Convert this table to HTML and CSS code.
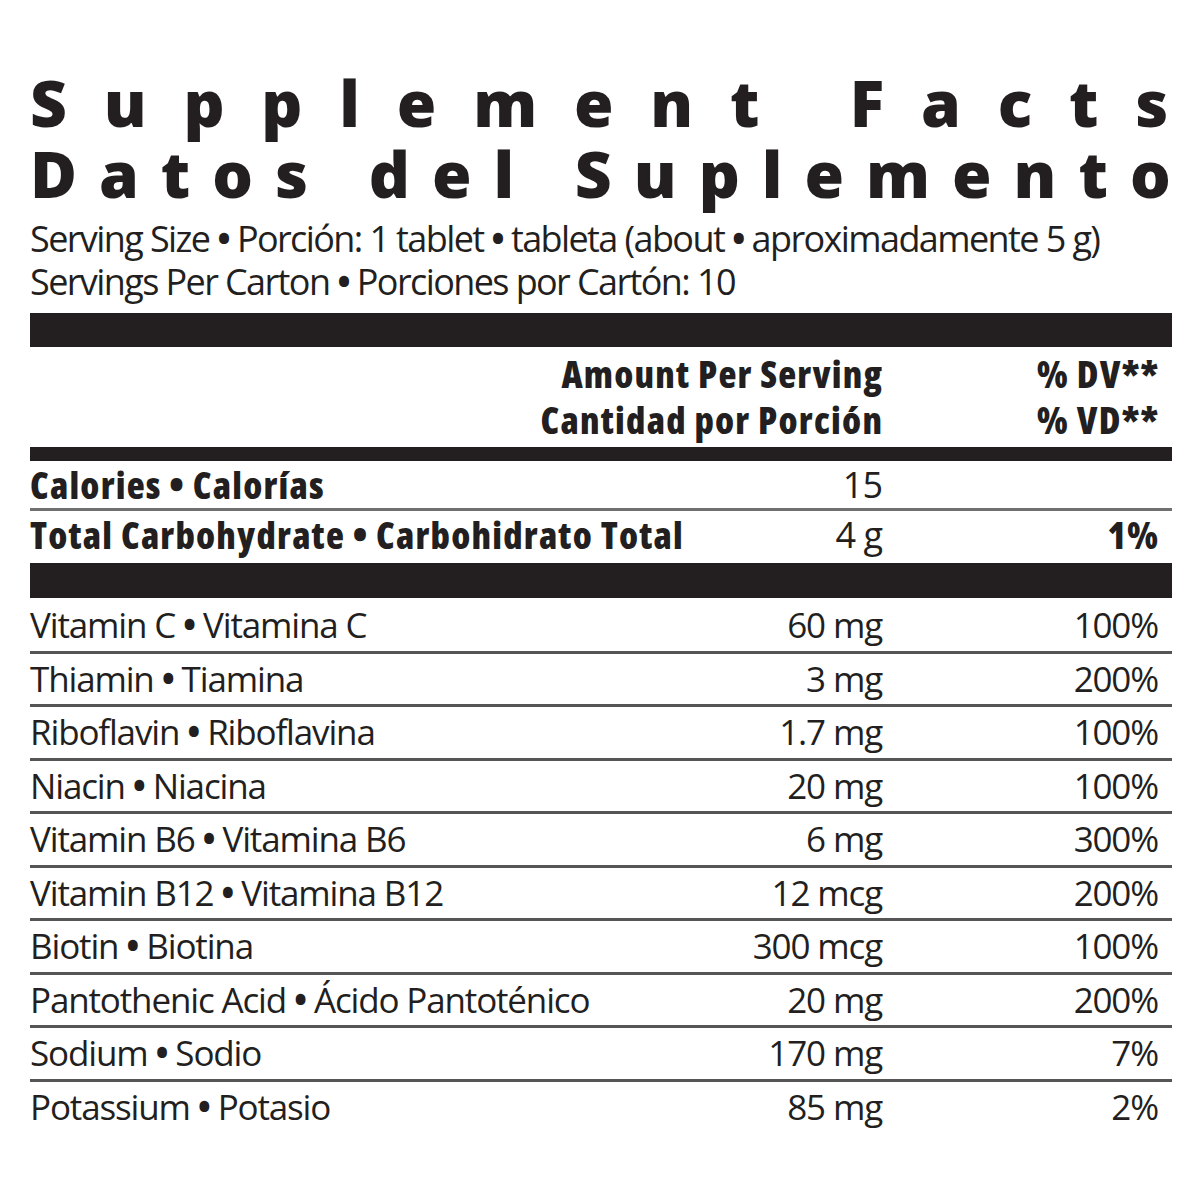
FILE: index.html
```html
<!DOCTYPE html>
<html lang="en">
<head>
<meta charset="utf-8">
<title>Supplement Facts</title>
<link rel="stylesheet" href="styles.css">
</head>
<body>
<div class="label">
  <h1 class="title">
    <span class="title-line title-en">Supplement Fact<span class="end">s</span></span>
    <span class="title-line title-es">Datos del Suplement<span class="end">o</span></span>
  </h1>
  <div class="serving">
    <div>Serving Size <span class="dot">•</span> Porción: 1 tablet <span class="dot">•</span> tableta (about <span class="dot">•</span> aproximadamente 5 g)</div>
    <div>Servings Per Carton <span class="dot">•</span> Porciones por Cartón: 10</div>
  </div>
  <div class="bar bar-top"></div>
  <div class="row head">
    <div class="name"></div>
    <div class="amt bold">Amount Per Serving<br>Cantidad por Porción</div>
    <div class="dv bold">% DV**<br>% VD**</div>
  </div>
  <div class="bar bar-mid"></div>
  <div class="row macro line">
    <div class="name bold">Calories • Calorías</div>
    <div class="amt">15</div>
    <div class="dv"></div>
  </div>
  <div class="row macro last">
    <div class="name bold">Total Carbohydrate • Carbohidrato Total</div>
    <div class="amt">4 g</div>
    <div class="dv bold">1%</div>
  </div>
  <div class="bar bar-sep"></div>
  <div class="items">
    <div class="row item line"><div class="name">Vitamin C <span class="dot">•</span> Vitamina C</div><div class="amt">60 mg</div><div class="dv">100%</div></div>
    <div class="row item line"><div class="name">Thiamin <span class="dot">•</span> Tiamina</div><div class="amt">3 mg</div><div class="dv">200%</div></div>
    <div class="row item line"><div class="name">Riboflavin <span class="dot">•</span> Riboflavina</div><div class="amt">1.7 mg</div><div class="dv">100%</div></div>
    <div class="row item line"><div class="name">Niacin <span class="dot">•</span> Niacina</div><div class="amt">20 mg</div><div class="dv">100%</div></div>
    <div class="row item line"><div class="name">Vitamin B6 <span class="dot">•</span> Vitamina B6</div><div class="amt">6 mg</div><div class="dv">300%</div></div>
    <div class="row item line"><div class="name">Vitamin B12 <span class="dot">•</span> Vitamina B12</div><div class="amt">12 mcg</div><div class="dv">200%</div></div>
    <div class="row item line"><div class="name">Biotin <span class="dot">•</span> Biotina</div><div class="amt">300 mcg</div><div class="dv">100%</div></div>
    <div class="row item line"><div class="name">Pantothenic Acid <span class="dot">•</span> Ácido Pantoténico</div><div class="amt">20 mg</div><div class="dv">200%</div></div>
    <div class="row item line"><div class="name">Sodium <span class="dot">•</span> Sodio</div><div class="amt">170 mg</div><div class="dv">7%</div></div>
    <div class="row item"><div class="name">Potassium <span class="dot">•</span> Potasio</div><div class="amt">85 mg</div><div class="dv">2%</div></div>
  </div>
</div>
</body>
</html>
```
FILE: styles.css
```css
html, body {
  margin: 0;
  padding: 0;
  background: #ffffff;
}

.label {
  width: 1142px;
  margin-left: 30px;
  color: #231f20;
  font-family: "Open Sans", "Noto Sans", sans-serif;
}

.title {
  margin: 67px 0 0 0;
  font-size: 64px;
  font-weight: 800;
  line-height: 71px;
  white-space: nowrap;
}

.title-line {
  display: block;
}

.title-en {
  letter-spacing: 36.8px;
}

.title-es {
  letter-spacing: 22px;
}

.title .end {
  letter-spacing: 0;
}

.serving {
  margin-top: 8px;
  font-size: 36px;
  font-weight: 400;
  letter-spacing: -1.6px;
  line-height: 43px;
  white-space: nowrap;
}

.dot {
  font-weight: 700;
}

.bar {
  background: #231f20;
}

.bar-top {
  height: 34px;
  margin-top: 10px;
}

.bar-mid {
  height: 14px;
  margin-top: 4px;
}

.bar-sep {
  height: 35px;
}

.row {
  display: grid;
  grid-template-columns: 1fr max-content 276px;
  padding-right: 14px;
  white-space: nowrap;
}

.amt,
.dv {
  text-align: right;
}

.bold {
  font-weight: 800;
  font-stretch: 75%;
  letter-spacing: 1.2px;
}

.amt.bold,
.dv.bold {
  margin-right: -1.2px;
}

.head {
  padding-top: 4px;
  font-size: 37px;
  line-height: 46px;
}

.macro {
  font-size: 36px;
  font-weight: 400;
  letter-spacing: -1px;
  line-height: 47px;
}

.macro .bold {
  font-size: 37px;
  letter-spacing: 1.2px;
}

.macro.last {
  padding-bottom: 5px;
}

.macro.line {
  border-bottom: 3px solid #707070;
}

.items {
  padding-top: 2px;
}

.item {
  font-size: 35px;
  font-weight: 400;
  letter-spacing: -1.15px;
  line-height: 50.5px;
}

.item.line {
  border-bottom: 3px solid #555555;
}
```
